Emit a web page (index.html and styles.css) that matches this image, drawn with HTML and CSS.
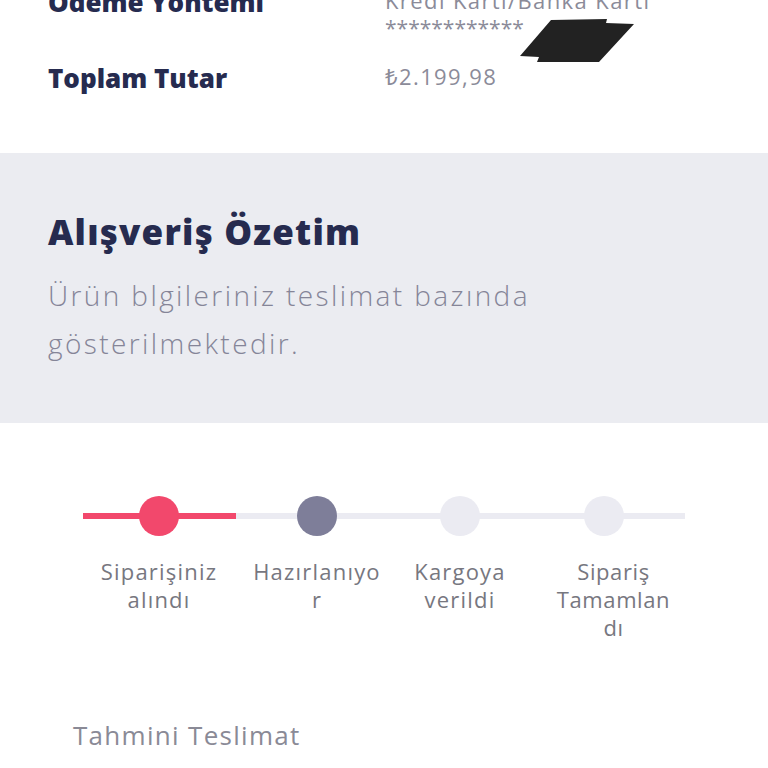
FILE: index.html
```html
<!DOCTYPE html>
<html lang="tr">
<head>
<meta charset="utf-8">
<link rel="stylesheet" href="styles.css">
</head>
<body>
<section class="info">
  <div class="row">
    <div class="label">Ödeme Yöntemi</div>
    <div class="value">Kredi Kartı/Banka Kartı<br><span class="mask">************</span></div>
  </div>
  <div class="row">
    <div class="label">Toplam Tutar</div>
    <div class="value">₺2.199,98</div>
  </div>
  <svg class="redact" width="120" height="48" viewBox="0 0 120 48">
    <polygon points="31,2 87,1 86,5 114,6 79,44 17,44 19,39 0,38" fill="#222"/>
  </svg>
</section>
<section class="summary">
  <h2 class="title">Alışveriş Özetim</h2>
  <p class="desc">Ürün blgileriniz teslimat bazında gösterilmektedir.</p>
</section>
<section class="tracking">
  <div class="steps">
    <div class="track"><div class="track-fill"></div></div>
    <div class="step">
      <span class="dot dot-active"></span>
      <span class="step-label">Siparişiniz<br>alındı</span>
    </div>
    <div class="step">
      <span class="dot dot-current"></span>
      <span class="step-label">Hazırlanıyo<br>r</span>
    </div>
    <div class="step">
      <span class="dot"></span>
      <span class="step-label">Kargoya<br>verildi</span>
    </div>
    <div class="step">
      <span class="dot"></span>
      <span class="step-label">Sipariş<br>Tamamlan<br>dı</span>
    </div>
  </div>
  <div class="eta">Tahmini Teslimat</div>
</section>
</body>
</html>
```
FILE: styles.css
```css
html, body {
  margin: 0;
  padding: 0;
  background: #ffffff;
  font-family: "Open Sans", "Noto Sans", sans-serif;
}
.info {
  position: relative;
  height: 153px;
  padding: 0 0 0 48px;
  box-sizing: border-box;
  overflow: hidden;
}
.row {
  display: grid;
  grid-template-columns: 337px 1fr;
  align-items: start;
}
.row:first-child {
  margin-top: -13px;
  margin-bottom: 21px;
}
.label {
  font-weight: 800;
  font-size: 26px;
  color: #262b4f;
  line-height: 30px;
}
.value {
  font-size: 22px;
  color: #8b8b99;
  line-height: 27px;
  font-weight: 400;
  letter-spacing: 1.4px;
}
.mask {
  letter-spacing: 0;
  font-size: 21px;
}
.redact {
  position: absolute;
  left: 520px;
  top: 18px;
}
.summary {
  background: #ebecf1;
  height: 270px;
  box-sizing: border-box;
  padding: 57px 48px 0;
}
.title {
  margin: 0;
  font-size: 35px;
  font-weight: 800;
  color: #262b4f;
  line-height: 44px;
  letter-spacing: 1.2px;
}
.desc {
  margin: 17px 0 0;
  font-size: 28px;
  font-weight: 300;
  color: #858598;
  line-height: 48px;
  letter-spacing: 2.4px;
  max-width: 560px;
}
.tracking {
  padding: 73px 83px 0;
}
.steps {
  position: relative;
  display: grid;
  grid-template-columns: 152px 164px 122px 165px;
}
.track {
  position: absolute;
  left: 0;
  right: 0;
  top: 17px;
  height: 6px;
  background: #ebebf2;
}
.track-fill {
  width: 153px;
  height: 100%;
  background: #f2486c;
}
.step {
  position: relative;
  display: flex;
  flex-direction: column;
  align-items: center;
}
.dot {
  width: 40px;
  height: 40px;
  border-radius: 50%;
  background: #ebebf2;
}
.dot-active { background: #f2486c; }
.dot-current { background: #7e7e99; }
.step-label {
  margin-top: 21px;
  text-align: center;
  font-size: 22px;
  line-height: 28px;
  color: #77777f;
  letter-spacing: 1.2px;
  white-space: nowrap;
}
.step:last-child .step-label {
  margin-left: 20px;
  letter-spacing: 0.6px;
}
.eta {
  margin: 76px 0 0 -10px;
  font-size: 26px;
  color: #8a8a96;
  letter-spacing: 1.3px;
}
```
